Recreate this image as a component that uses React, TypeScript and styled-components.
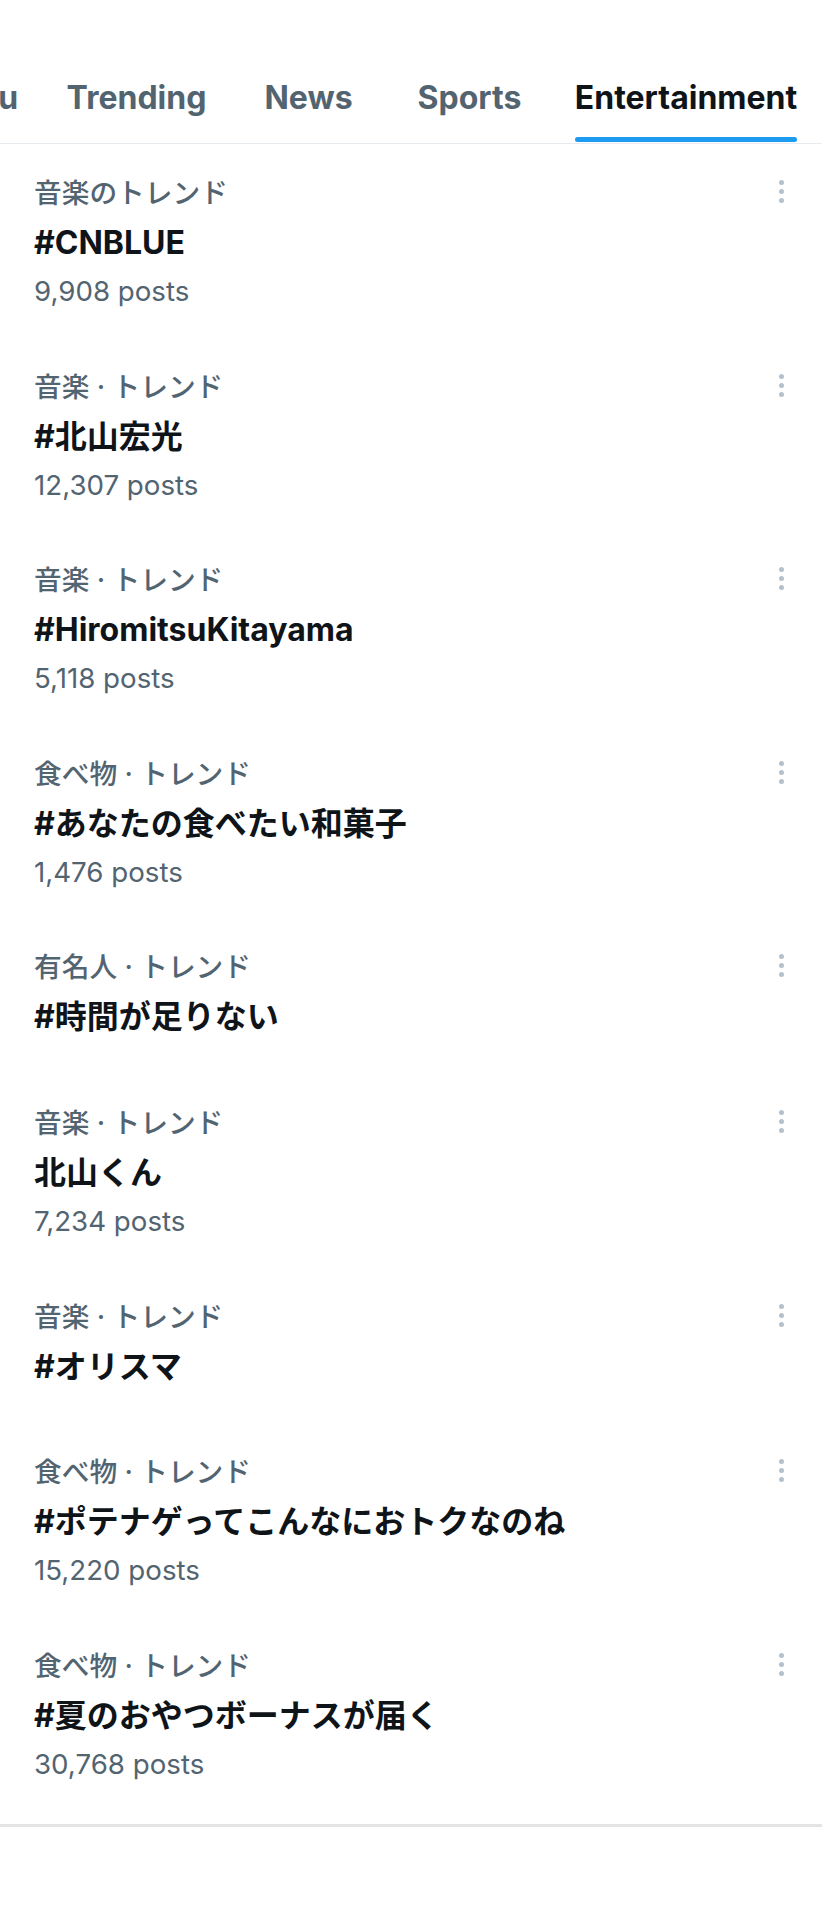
import React from "react";
import styled, { createGlobalStyle } from "styled-components";

const GlobalStyle = createGlobalStyle`
  html, body { margin: 0; padding: 0; background: #ffffff; }
  body {
    font-family: Inter, "Noto Sans CJK JP", "Noto Sans", sans-serif;
    -webkit-font-smoothing: antialiased;
  }
  * { box-sizing: border-box; }
`;

const Page = styled.div`
  width: 822px;
  min-height: 1920px;
  background: #ffffff;
  display: flex;
  flex-direction: column;
`;

const TabStrip = styled.nav`
  height: 144px;
  overflow: hidden;
  border-bottom: 1px solid #e6ecf0;
  display: flex;
  align-items: flex-end;
`;

const TabRow = styled.div<{ $offset: number }>`
  display: flex;
  align-items: flex-end;
  margin-left: ${(p) => p.$offset}px;
  flex-shrink: 0;
`;

const Tab = styled.div<{ $w: number }>`
  width: ${(p) => p.$w}px;
  flex-shrink: 0;
  display: flex;
  justify-content: center;
`;

const TabInner = styled.div`
  display: inline-flex;
  flex-direction: column;
  align-items: stretch;
`;

const TabLabel = styled.span<{ $active: boolean }>`
  font-size: 32px;
  line-height: 40px;
  font-weight: 700;
  white-space: nowrap;
  color: ${(p) => (p.$active ? "#0f1419" : "#536471")};
`;

const Indicator = styled.div<{ $active: boolean }>`
  height: 5px;
  margin-top: 19px;
  margin-bottom: 1px;
  border-radius: 3px;
  background: ${(p) => (p.$active ? "#1d9bf0" : "transparent")};
`;

const List = styled.div`
  display: flex;
  flex-direction: column;
`;

const Row = styled.div`
  display: flex;
  align-items: flex-start;
  padding: 29px 34px 27.6px 34px;
`;

const Content = styled.div`
  flex: 1;
  display: flex;
  flex-direction: column;
  min-width: 0;
`;

const Category = styled.div`
  font-size: 27.7px;
  line-height: 40px;
  font-weight: 500;
  color: #536471;
  white-space: nowrap;
`;

const Title = styled.div`
  font-size: 32px;
  line-height: 59px;
  font-weight: 700;
  color: #0f1419;
  white-space: nowrap;
`;

const Posts = styled.div`
  font-size: 27.7px;
  line-height: 38px;
  color: #536471;
`;

const MoreButton = styled.div`
  width: 13px;
  margin-top: 7px;
  display: flex;
  flex-direction: column;
  align-items: center;
  gap: 4px;
`;

const Dot = styled.span`
  width: 5px;
  height: 5px;
  border-radius: 50%;
  background: #b4c1cb;
`;

const Spacer = styled.div`
  height: 14px;
`;

const Divider = styled.div`
  height: 3px;
  background: #e2e4e6;
`;

type Trend = { category: string; title: string; posts?: string };

const trends: Trend[] = [
  { category: "音楽のトレンド", title: "#CNBLUE", posts: "9,908 posts" },
  { category: "音楽 · トレンド", title: "#北山宏光", posts: "12,307 posts" },
  { category: "音楽 · トレンド", title: "#HiromitsuKitayama", posts: "5,118 posts" },
  { category: "食べ物 · トレンド", title: "#あなたの食べたい和菓子", posts: "1,476 posts" },
  { category: "有名人 · トレンド", title: "#時間が足りない" },
  { category: "音楽 · トレンド", title: "北山くん", posts: "7,234 posts" },
  { category: "音楽 · トレンド", title: "#オリスマ" },
  { category: "食べ物 · トレンド", title: "#ポテナゲってこんなにおトクなのね", posts: "15,220 posts" },
  { category: "食べ物 · トレンド", title: "#夏のおやつボーナスが届く", posts: "30,768 posts" },
];

const tabs = [
  { label: "For you", w: 166 },
  { label: "Trending", w: 187 },
  { label: "News", w: 157 },
  { label: "Sports", w: 165 },
  { label: "Entertainment", w: 268 },
];

export default function App() {
  return (
    <Page>
      <GlobalStyle />
      <TabStrip>
        <TabRow $offset={-123}>
          {tabs.map((t) => {
            const active = t.label === "Entertainment";
            return (
              <Tab key={t.label} $w={t.w}>
                <TabInner>
                  <TabLabel $active={active}>{t.label}</TabLabel>
                  <Indicator $active={active} />
                </TabInner>
              </Tab>
            );
          })}
        </TabRow>
      </TabStrip>
      <List>
        {trends.map((t, i) => (
          <Row key={i}>
            <Content>
              <Category>{t.category}</Category>
              <Title>{t.title}</Title>
              {t.posts && <Posts>{t.posts}</Posts>}
            </Content>
            <MoreButton>
              <Dot />
              <Dot />
              <Dot />
            </MoreButton>
          </Row>
        ))}
      </List>
      <Spacer />
      <Divider />
    </Page>
  );
}
